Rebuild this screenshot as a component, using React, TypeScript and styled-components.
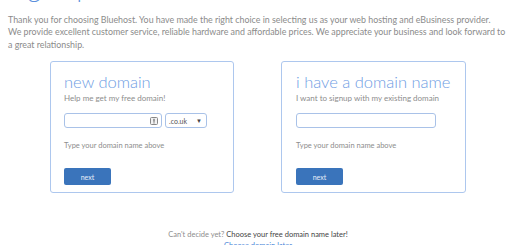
import React from "react";
import styled, { createGlobalStyle } from "styled-components";

const Global = createGlobalStyle`
  html, body { margin: 0; padding: 0; background: #fff; }
  body { font-family: Lato, "Open Sans", sans-serif; overflow: hidden; }
  * { box-sizing: border-box; }
`;

const Page = styled.div`
  width: 520px;
  height: 245px;
  overflow: hidden;
`;

const Heading = styled.h1`
  margin: -27px 0 0 8px;
  font-size: 26px;
  line-height: 28px;
  font-weight: 300;
  color: #5a8fdc;
`;

const Intro = styled.p`
  margin: 13px 0 0 8px;
  width: 510px;
  font-size: 8.85px;
  line-height: 12.4px;
  color: #8b8b8b;
`;

const Boxes = styled.div`
  display: flex;
  gap: 47px;
  margin: 10px 0 0 50px;
`;

const Box = styled.div<{ $w: number }>`
  width: ${(p) => p.$w}px;
  height: 132px;
  border: 1px solid #adc7ee;
  border-radius: 3px;
  padding: 11px 0 0 ${(p) => (p.$w > 184 ? 14 : 13)}px;
`;

const Title = styled.div`
  font-size: 16.5px;
  font-weight: 300;
  color: #6e9de3;
  line-height: 18px;
`;

const Sub = styled.div`
  font-size: 8px;
  color: #8d8d8d;
  margin-top: 2px;
  line-height: 10px;
`;

const FieldRow = styled.div`
  display: flex;
  gap: 3px;
  margin-top: 10px;
`;

const Input = styled.div<{ $w: number }>`
  position: relative;
  width: ${(p) => p.$w}px;
  height: 15px;
  border: 1px solid #a9c2e8;
  border-radius: 3px;
  background: #fff;
`;

const InputIcon = styled.svg`
  position: absolute;
  right: 3px;
  top: 3px;
`;

const Select = styled.div`
  width: 42px;
  height: 15px;
  border: 1px solid #a9c2e8;
  border-radius: 3px;
  display: flex;
  align-items: center;
  justify-content: space-between;
  padding: 0 4px 0 3px;
  font-size: 7px;
  color: #555;
`;

const Arrow = styled.span`
  font-size: 6px;
  color: #444;
`;

const Hint = styled.div`
  font-size: 7.5px;
  color: #8d8d8d;
  margin-top: 13px;
`;

const NextButton = styled.button`
  display: block;
  width: 47px;
  height: 17px;
  margin-top: 18px;
  border: none;
  border-radius: 2px;
  background: #3a74bb;
  color: #e6eef9;
  font-family: inherit;
  font-size: 7px;
  padding: 0;
`;

const Footer = styled.div`
  width: 516px;
  text-align: center;
  margin-top: 37px;
  font-size: 7.5px;
  line-height: 10px;
  color: #8d8d8d;
`;

const Strong = styled.span`
  color: #444;
`;

const Link = styled.div`
  color: #4a86d8;
  font-size: 7.5px;
  margin-top: 1px;
`;

export default function App() {
  return (
    <Page>
      <Global />
      <Heading>Sign up</Heading>
      <Intro>
        Thank you for choosing Bluehost. You have made the right choice in selecting us as your web hosting and
        eBusiness provider.
        <br />
        We provide excellent customer service, reliable hardware and affordable prices. We appreciate your business
        and look forward to
        <br />a great relationship.
      </Intro>
      <Boxes>
        <Box $w={184}>
          <Title>new domain</Title>
          <Sub>Help me get my free domain!</Sub>
          <FieldRow>
            <Input $w={98}>
              <InputIcon width="8" height="8" viewBox="0 0 8 8">
                <rect x="0.5" y="0.5" width="7" height="7" rx="1" fill="#f2f2f2" stroke="#888" />
                <rect x="3.4" y="1.8" width="1.2" height="3" fill="#666" />
                <rect x="3.4" y="5.4" width="1.2" height="1" fill="#666" />
              </InputIcon>
            </Input>
            <Select>
              <span>.co.uk</span>
              <Arrow>▼</Arrow>
            </Select>
          </FieldRow>
          <Hint>Type your domain name above</Hint>
          <NextButton>next</NextButton>
        </Box>
        <Box $w={185}>
          <Title>i have a domain name</Title>
          <Sub>I want to signup with my existing domain</Sub>
          <FieldRow>
            <Input $w={140} />
          </FieldRow>
          <Hint>Type your domain name above</Hint>
          <NextButton>next</NextButton>
        </Box>
      </Boxes>
      <Footer>
        Can't decide yet? <Strong>Choose your free domain name later!</Strong>
        <Link>Choose domain later</Link>
      </Footer>
    </Page>
  );
}
